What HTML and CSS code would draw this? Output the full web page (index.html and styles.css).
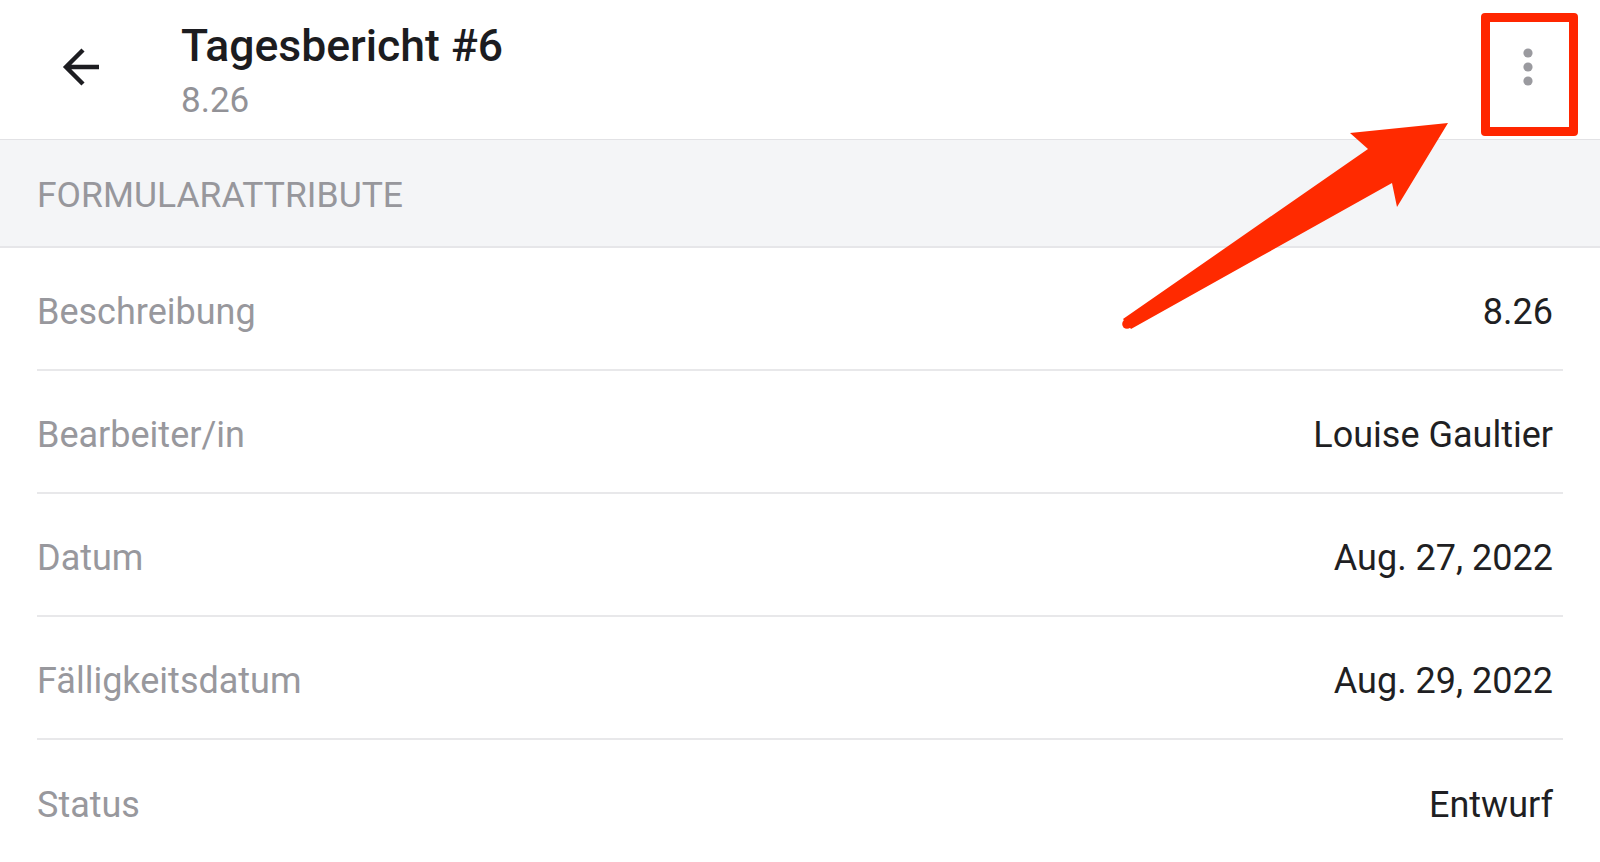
FILE: index.html
```html
<!DOCTYPE html>
<html lang="de">
<head>
  <meta charset="UTF-8">
  <meta name="viewport" content="width=device-width, initial-scale=1">
  <title>Tagesbericht #6</title>
  <link rel="stylesheet" href="styles.css">
</head>
<body>
  <header class="topbar">
    <button class="icon-btn back" aria-label="Zurück">
      <svg viewBox="0 0 56 56" width="56" height="56">
        <path d="M46 28H13M30 11L13 28L30 45" fill="none" stroke="#1d1d21" stroke-width="4.4"/>
      </svg>
    </button>
    <div class="titles">
      <h1>Tagesbericht #6</h1>
      <div class="subtitle">8.26</div>
    </div>
    <button class="icon-btn more" aria-label="Mehr">
      <svg viewBox="0 0 56 56" width="56" height="56">
        <circle cx="28" cy="14" r="4.6" fill="#9a9a9f"/>
        <circle cx="28" cy="28" r="4.6" fill="#9a9a9f"/>
        <circle cx="28" cy="42" r="4.6" fill="#9a9a9f"/>
      </svg>
    </button>
  </header>

  <div class="section-head">FORMULARATTRIBUTE</div>

  <ul class="attrs">
    <li><span class="label">Beschreibung</span><span class="value">8.26</span></li>
    <li><span class="label">Bearbeiter/in</span><span class="value">Louise Gaultier</span></li>
    <li><span class="label">Datum</span><span class="value">Aug. 27, 2022</span></li>
    <li><span class="label">Fälligkeitsdatum</span><span class="value">Aug. 29, 2022</span></li>
    <li><span class="label">Status</span><span class="value">Entwurf</span></li>
  </ul>

  <!-- annotation: box around the menu button and pointer arrow -->
  <div class="mark"></div>
  <svg class="pointer" viewBox="0 0 1600 862" width="1600" height="862">
    <path d="M1123 319L1368 149L1350 133L1448 123L1397 207L1392 183L1131 329Z" fill="#ff2a00"/>
    <circle cx="1127" cy="324" r="4.8" fill="#ff2a00"/>
  </svg>
</body>
</html>
```

FILE: styles.css
```css
* {
  box-sizing: border-box;
}
body {
  margin: 0;
  font-family: Roboto, "Liberation Sans", sans-serif;
  background: #fff;
  height: 862px;
  overflow: hidden;
  position: relative;
}
.topbar {
  height: 140px;
  display: flex;
  align-items: center;
  border-bottom: 1px solid #e2e2e5;
  padding: 0 44px 0 53px;
}
.icon-btn {
  width: 56px;
  height: 56px;
  padding: 0;
  border: none;
  background: none;
}
.icon-btn svg {
  display: block;
}
.back {
  margin-top: -6px;
}
.more {
  margin-left: auto;
  margin-top: -6px;
}
.titles {
  margin-left: 72px;
}
h1 {
  margin: 0;
  font-size: 44.5px;
  font-weight: 500;
  line-height: 56px;
  color: #1c1c20;
}
.subtitle {
  margin-top: 6px;
  font-size: 35px;
  line-height: 42px;
  color: #929297;
}
.section-head {
  height: 108px;
  display: flex;
  align-items: center;
  padding: 4px 0 0 37px;
  background: #f4f5f7;
  border-bottom: 2px solid #e6e6e9;
  font-size: 35.5px;
  color: #97979c;
}
.attrs {
  list-style: none;
  margin: 0 37px;
  padding: 0;
}
.attrs li {
  height: 123px;
  display: flex;
  align-items: center;
  justify-content: space-between;
  padding: 6px 10px 0 0;
  border-bottom: 2px solid #e8e8ea;
  font-size: 36px;
}
.attrs li:last-child {
  border-bottom: none;
}
.label {
  color: #98989d;
}
.value {
  color: #1f1f23;
}
.mark {
  position: absolute;
  left: 1481px;
  top: 13px;
  width: 97px;
  height: 123px;
  border: 9px solid #ff2600;
  border-radius: 4px;
}
.pointer {
  position: absolute;
  left: 0;
  top: 0;
  pointer-events: none;
}
```
